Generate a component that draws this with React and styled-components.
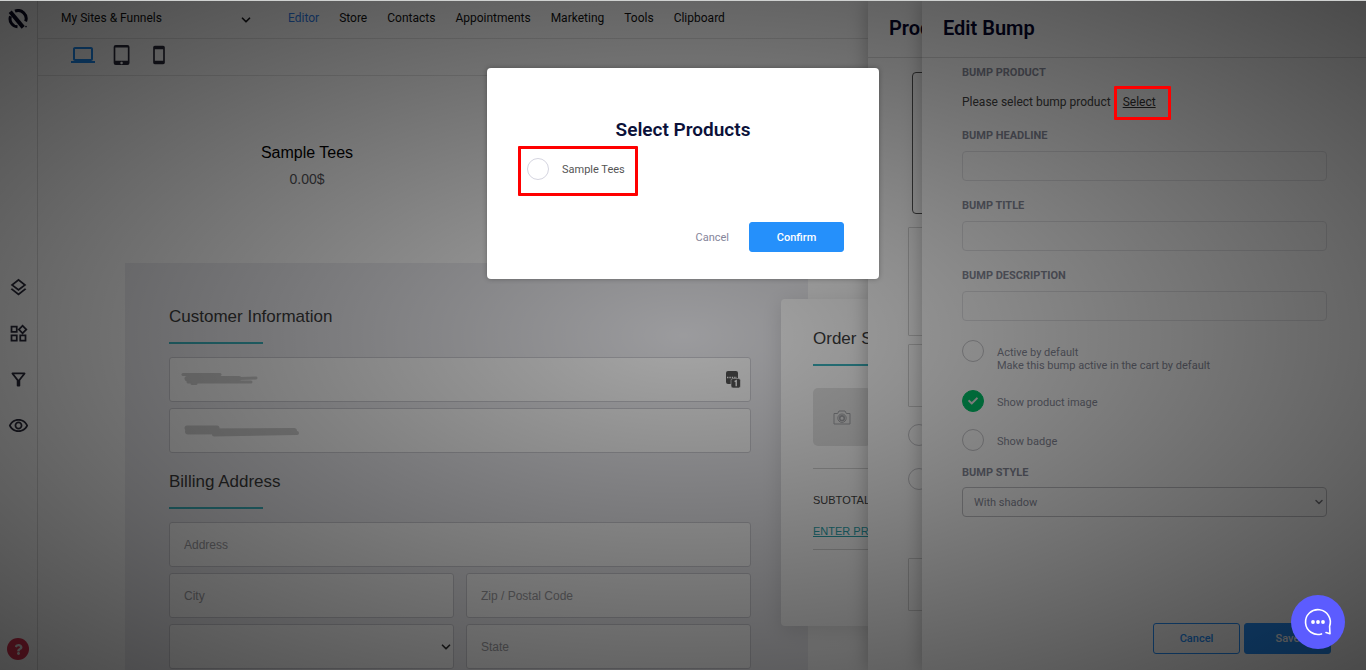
import React, { useState } from 'react';
import styled, { createGlobalStyle } from 'styled-components';
import {
    MdLaptop,
    MdTabletMac,
    MdStayCurrentPortrait,
    MdOutlineLayers,
    MdOutlineWidgets,
    MdOutlineFilterAlt,
    MdOutlineRemoveRedEye,
} from 'react-icons/md';
import { FaCheck, FaQuestion } from 'react-icons/fa';
import { FiChevronDown } from 'react-icons/fi';

const GlobalStyle = createGlobalStyle`
    * {
        box-sizing: border-box;
    }
    body {
        margin: 0;
        font-family: Roboto, "Liberation Sans", sans-serif;
        color: #1b1b1f;
    }
    button, input, select {
        font-family: inherit;
        margin: 0;
    }
`;

const Page = styled.div`
    position: relative;
    display: flex;
    height: 100vh;
    overflow: hidden;
    background-color: #fff;
    border-top: 1px solid #cfd1d0;
`;

/* ---------- sidebar ---------- */

const Sidebar = styled.nav`
    width: 38px;
    flex-shrink: 0;
    display: flex;
    flex-direction: column;
    align-items: center;
    justify-content: space-between;
    padding: 8px 1px 10px 0;
    border-right: 1px solid #dcdcdc;
`;

const SideGroup = styled.div`
    display: flex;
    flex-direction: column;
    gap: 25px;
    padding-top: 46px;
`;

const IconButton = styled.button`
    display: flex;
    align-items: center;
    justify-content: center;
    padding: 0;
    border: none;
    background: none;
    color: ${props => props.$active ? '#1d8bf1' : '#2a2a3a'};
    font-size: ${props => props.$size || 21}px;
    cursor: pointer;
`;

const HelpButton = styled.button`
    width: 22px;
    height: 22px;
    display: flex;
    align-items: center;
    justify-content: center;
    padding: 0;
    border: none;
    border-radius: 50%;
    background-color: #d9304f;
    color: #e4e4e4;
    font-size: 11px;
    cursor: pointer;
`;

/* ---------- header ---------- */

const Main = styled.div`
    flex: 1;
    min-width: 0;
    display: flex;
    flex-direction: column;
`;

const Header = styled.header`
    height: 38px;
    flex-shrink: 0;
    display: flex;
    align-items: center;
    gap: 35px;
    padding: 0 23px 3px;
    border-bottom: 1px solid #e4e4e4;
`;

const SitePicker = styled.label`
    width: 192px;
    display: flex;
    align-items: center;
    position: relative;
    svg {
        position: absolute;
        right: 0;
        top: 4px;
        font-size: 14px;
        stroke-width: 3;
        pointer-events: none;
    }
`;

const SiteSelect = styled.select`
    width: 100%;
    appearance: none;
    border: none;
    padding: 0;
    background: none;
    font-size: 12px;
    line-height: 18px;
    color: #111;
`;

const Menu = styled.nav`
    display: flex;
    gap: 20px;
`;

const MenuLink = styled.a`
    font-size: 12px;
    line-height: 18px;
    text-decoration: none;
    color: ${props => props.$active ? '#2f80ed' : '#111'};
`;

const Devices = styled.div`
    height: 37px;
    flex-shrink: 0;
    display: flex;
    align-items: center;
    gap: 17px;
    padding: 0 33px 4px;
    border-bottom: 1px solid #e4e4e4;
`;

/* ---------- canvas ---------- */

const Canvas = styled.main`
    padding: 65px 87px 0;
    font-family: "Liberation Sans", Arial, sans-serif;
`;

const Products = styled.div`
    display: grid;
    grid-template-columns: repeat(3, 1fr);
    gap: 31px;
`;

const Product = styled.div`
    display: flex;
    flex-direction: column;
    align-items: center;
    gap: 4px;
    height: 122px;
`;

const ProductName = styled.div`
    font-size: 16px;
    line-height: 24px;
    color: #000;
`;

const ProductPrice = styled.div`
    font-size: 14px;
    line-height: 20px;
    color: #55555a;
`;

const Checkout = styled.div`
    display: grid;
    grid-template-columns: 683fr 471fr;
    align-items: start;
`;

const FormPanel = styled.form`
    min-height: 500px;
    padding: 41px 57px 0 44px;
    background-color: #eeeef2;
`;

const SectionTitle = styled.h2`
    margin: 0 0 ${props => props.$gap || 13}px;
    font-size: 17px;
    line-height: 26px;
    font-weight: 400;
    color: #3c3c3c;
    &::after {
        content: '';
        display: block;
        width: ${props => props.$wide ? '100%' : '94px'};
        height: 2px;
        margin-top: 12px;
        background-color: #3cb4bf;
    }
`;

const Fields = styled.div`
    display: grid;
    grid-template-columns: 1fr 1fr;
    gap: 6px 12px;
    margin-bottom: 16px;
`;

const FieldBox = styled.div`
    position: relative;
    grid-column: ${props => props.$full ? '1 / -1' : 'auto'};
    svg {
        position: absolute;
        pointer-events: none;
    }
`;

const field = `
    width: 100%;
    height: 45px;
    display: block;
    padding: 0 14px;
    border: 1px solid #cfcfd5;
    border-radius: 3px;
    background-color: #fff;
    font-size: 12px;
    outline: none;
`;

const Field = styled.input`
    ${field}
    &::placeholder {
        color: #a0a0a4;
    }
`;

const FieldSelect = styled.select`
    ${field}
    appearance: none;
`;

const FieldChevron = styled(FiChevronDown)`
    right: 1px;
    top: 16px;
    font-size: 14px;
    stroke-width: 3;
    color: #333;
`;

const Scribble = styled.svg`
    left: 10px;
    top: 12px;
    width: 124px;
    height: 22px;
`;

const KeyIcon = styled.svg`
    right: 10px;
    top: 13px;
    width: 16px;
    height: 18px;
`;

const Summary = styled.section`
    height: 327px;
    margin: 36px 0 0 -27px;
    padding: 27px 32px;
    border-radius: 4px;
    background-color: #fff;
    box-shadow: 0 4px 20px rgba(0, 0, 0, 0.12);
`;

const Thumb = styled.div`
    width: 58px;
    height: 58px;
    display: flex;
    align-items: center;
    justify-content: center;
    border-radius: 5px;
    background-color: #e6e6e6;
`;

const SummaryRow = styled.div`
    display: flex;
    justify-content: space-between;
    margin-top: 22px;
    padding-top: 22px;
    border-top: 1px solid #d4d4d4;
    font-size: 11px;
    line-height: 18px;
    color: #444;
`;

const PromoRow = styled.div`
    padding: 14px 0 10px;
    border-bottom: 1px solid #d4d4d4;
    font-size: 11px;
    line-height: 16px;
`;

const PromoLink = styled.a`
    color: #2ba6b0;
`;

/* ---------- drawers ---------- */

const Drawer = styled.aside`
    position: absolute;
    top: 0;
    right: 0;
    bottom: 0;
    width: ${props => props.$width}px;
    display: flex;
    flex-direction: column;
    background-color: #fff;
    box-shadow: 0 0 18px rgba(0, 0, 0, 0.28);
`;

const DrawerTitle = styled.h2`
    height: 57px;
    flex-shrink: 0;
    margin: 0;
    padding: 0 21px 2px;
    display: flex;
    align-items: center;
    border-bottom: 1px solid #dedede;
    font-size: 20px;
    font-weight: 600;
    color: #06062e;
`;

const ProductsBody = styled.div`
    padding: 14px 40px;
    display: flex;
    flex-direction: column;
`;

const OutlineBox = styled.div`
    height: ${props => props.$height}px;
    margin: 0 0 ${props => props.$gap || 0}px ${props => props.$selected ? 4 : 0}px;
    border: 1px solid ${props => props.$selected ? '#555' : '#d4d4d4'};
    border-radius: ${props => props.$selected ? 4 : 1}px;
`;

const DrawerBody = styled.div`
    flex: 1;
    padding: 7px 39px 0 40px;
`;

const Label = styled.label`
    display: block;
    margin-bottom: ${props => props.$tight ? 6 : 7}px;
    font-size: 11px;
    line-height: 16px;
    font-weight: 700;
    color: #8a8d9c;
`;

const SelectLine = styled.div`
    display: flex;
    gap: 12px;
    margin: 11px 0 16px;
    font-size: 12px;
    line-height: 20px;
    color: #444;
    a {
        color: #333;
    }
`;

const Marked = styled.span`
    position: relative;
    &::after {
        content: '';
        position: absolute;
        inset: -6px -15px -8px -9px;
        border: 3px solid #f00;
        border-radius: 1px;
        z-index: 20;
        pointer-events: none;
    }
`;

const TextInput = styled.input`
    width: 100%;
    height: 30px;
    display: block;
    margin-bottom: 17px;
    padding: 0 11px;
    border: 1px solid #e4e4e7;
    border-radius: 4px;
    background: none;
    outline: none;
`;

const CheckList = styled.div`
    padding-top: 2px;
`;

const CheckRow = styled.label`
    display: flex;
    gap: 13px;
    margin-bottom: ${props => props.$gap || 0}px;
    font-size: 11px;
    line-height: 13px;
    color: ${props => props.$dark ? '#555' : '#8a8d9c'};
    > span:nth-child(2) {
        padding-top: ${props => props.$dark ? 5 : 6}px;
    }
`;

const CheckBox = styled.span`
    width: 22px;
    height: 22px;
    flex-shrink: 0;
    display: grid;
    place-items: center;
    > * {
        grid-area: 1 / 1;
    }
    input {
        width: 22px;
        height: 22px;
        appearance: none;
        border: 1px solid ${props => props.$light ? '#d5d5e0' : '#c8c8cc'};
        border-radius: 50%;
        cursor: pointer;
    }
    input:checked {
        border-color: #00c46a;
        background-color: #00c46a;
    }
    svg {
        display: none;
        font-size: 10px;
        color: #e8e8e8;
        pointer-events: none;
    }
    input:checked + svg {
        display: block;
    }
`;

const StyleBox = styled.div`
    position: relative;
    svg {
        position: absolute;
        right: 2px;
        top: 9px;
        font-size: 12px;
        stroke-width: 3;
        color: #7a7a80;
        pointer-events: none;
    }
`;

const StyleSelect = styled.select`
    width: 100%;
    height: 30px;
    appearance: none;
    padding: 0 11px;
    border: 1px solid #c4c4c8;
    border-radius: 4px;
    background: none;
    font-size: 11px;
    color: #8a8d9c;
`;

const DrawerFooter = styled.div`
    display: flex;
    justify-content: flex-end;
    gap: 4px;
    padding: 0 35px 16px;
`;

const Button = styled.button`
    width: ${props => props.$width || 87}px;
    height: ${props => props.$short ? 30 : 31}px;
    border: 1px solid #2590fb;
    border-radius: 3px;
    background-color: ${props => props.$primary ? '#2590fb' : 'transparent'};
    color: ${props => props.$primary ? '#fff' : '#2590fb'};
    font-size: 11px;
    font-weight: 500;
    cursor: pointer;
`;

/* ---------- modal ---------- */

const Overlay = styled.div`
    position: absolute;
    inset: 0;
    z-index: 10;
    display: flex;
    align-items: flex-start;
    justify-content: center;
    padding-top: 67px;
    background: radial-gradient(rgba(0, 0, 0, 0.35), rgba(0, 0, 0, 0.71));
`;

const Modal = styled.div`
    width: 392px;
    padding: 49px 35px 27px 31px;
    display: flex;
    flex-direction: column;
    border-radius: 4px;
    background-color: #fff;
    box-shadow: 0 0 5px rgba(0, 0, 0, 0.3);
`;

const ModalTitle = styled.h3`
    margin: 0 0 3px 4px;
    font-size: 19px;
    line-height: 26px;
    font-weight: 600;
    text-align: center;
    color: #0b1139;
`;

const Option = styled.div`
    align-self: flex-start;
    width: 120px;
    height: 50px;
    padding: 9px 6px;
    border: 3px solid #f00;
    border-radius: 1px;
`;

const ModalFooter = styled.div`
    display: flex;
    align-items: center;
    justify-content: flex-end;
    gap: 20px;
    margin-top: 26px;
`;

const TextButton = styled.button`
    padding: 0;
    border: none;
    background: none;
    font-size: 11px;
    color: #85859a;
    cursor: pointer;
`;

const ChatButton = styled.button`
    position: absolute;
    right: 21px;
    bottom: 21px;
    z-index: 20;
    width: 54px;
    height: 54px;
    display: flex;
    align-items: center;
    justify-content: center;
    padding: 0;
    border: none;
    border-radius: 50%;
    background-color: #5c5cff;
    cursor: pointer;
`;

const menu = ['Editor', 'Store', 'Contacts', 'Appointments', 'Marketing', 'Tools', 'Clipboard'];

const Logo = () => (
    <svg width="20" height="20" viewBox="0 0 20 20" fill="none" stroke="#0b0b24">
        <path d="M7 2.2A8 8 0 0 1 17.6 12.4" strokeWidth="3" />
        <path d="M2.5 7.2A8 8 0 0 0 9.5 17.8" strokeWidth="3" />
        <path d="M2.2 2.8L15.2 18.4" strokeWidth="4" />
        <circle cx="18" cy="17.6" r="0.8" fill="#0b0b24" stroke="none" />
    </svg>
);

const Camera = () => (
    <svg width="18" height="15" viewBox="0 0 18 15" fill="none" stroke="#a4a5a9">
        <path d="M1 3.5h3.6L6 1h6l1.4 2.5H17V14H1z" strokeLinejoin="round" />
        <circle cx="9" cy="8.2" r="4.2" />
        <circle cx="9" cy="8.2" r="2.3" strokeWidth="1.6" />
    </svg>
);

const Check = ({ id, light, label, type = 'checkbox', defaultChecked }) => (
    <CheckBox $light={light}>
        <input id={id} type={type} aria-label={label} defaultChecked={defaultChecked} />
        <FaCheck />
    </CheckBox>
);

const CheckoutForm = () => (
    <FormPanel>
        <SectionTitle>Customer Information</SectionTitle>
        <Fields>
            <FieldBox $full>
                <Field aria-label="Full name" />
                <Scribble viewBox="0 0 124 22" fill="none" stroke="#d2d2d2" strokeLinecap="round">
                    <path d="M4 5.5H41" strokeWidth="3" />
                    <path d="M8 9.5H60" strokeWidth="5" />
                    <path d="M8 11L77 9" strokeWidth="3" />
                    <path d="M9 13H72" strokeWidth="3" />
                    <path d="M13 14.5H17" strokeWidth="3" />
                </Scribble>
                <KeyIcon viewBox="0 0 16 18">
                    <rect x="1" y="1" width="12" height="13" rx="2" fill="#555" />
                    <path d="M2 7.5h10" stroke="#fff" strokeWidth="1.4" strokeDasharray="1.4 1" />
                    <rect x="6" y="8.5" width="9.5" height="9.5" rx="2" fill="#555" stroke="#fff" strokeWidth="0.6" />
                    <path d="M9.6 11.6l1.6-.9v5.6" fill="none" stroke="#fff" strokeWidth="1.4" />
                </KeyIcon>
            </FieldBox>
            <FieldBox $full>
                <Field aria-label="Email" />
                <Scribble viewBox="0 0 124 22" fill="none" stroke="#d2d2d2" strokeLinecap="round">
                    <path d="M8 8H38" strokeWidth="5" />
                    <path d="M9 11.5L115 11" strokeWidth="6" />
                    <path d="M35 14.5L118 13" strokeWidth="4" />
                </Scribble>
            </FieldBox>
        </Fields>
        <SectionTitle>Billing Address</SectionTitle>
        <Fields>
            <FieldBox $full><Field placeholder="Address" aria-label="Address" /></FieldBox>
            <FieldBox><Field placeholder="City" aria-label="City" /></FieldBox>
            <FieldBox><Field placeholder="Zip / Postal Code" aria-label="Zip / Postal Code" /></FieldBox>
            <FieldBox>
                <FieldSelect aria-label="Country"><option></option></FieldSelect>
                <FieldChevron />
            </FieldBox>
            <FieldBox><Field placeholder="State" aria-label="State" /></FieldBox>
        </Fields>
    </FormPanel>
);

const BumpDrawer = () => (
    <Drawer $width={444}>
        <DrawerTitle>Edit Bump</DrawerTitle>
        <DrawerBody>
            <Label as="div">BUMP PRODUCT</Label>
            <SelectLine>
                <span>Please select bump product</span>
                <Marked><a href="#select">Select</a></Marked>
            </SelectLine>
            <Label htmlFor="headline">BUMP HEADLINE</Label>
            <TextInput id="headline" />
            <Label htmlFor="title">BUMP TITLE</Label>
            <TextInput id="title" />
            <Label htmlFor="description">BUMP DESCRIPTION</Label>
            <TextInput id="description" />
            <CheckList>
                <CheckRow htmlFor="active" $gap={18}>
                    <Check id="active" />
                    <span>Active by default<br />Make this bump active in the cart by default</span>
                </CheckRow>
                <CheckRow htmlFor="image" $gap={17}>
                    <Check id="image" defaultChecked />
                    <span>Show product image</span>
                </CheckRow>
                <CheckRow htmlFor="badge" $gap={14}>
                    <Check id="badge" />
                    <span>Show badge</span>
                </CheckRow>
            </CheckList>
            <Label htmlFor="style" $tight>BUMP STYLE</Label>
            <StyleBox>
                <StyleSelect id="style"><option>With shadow</option></StyleSelect>
                <FiChevronDown />
            </StyleBox>
        </DrawerBody>
        <DrawerFooter>
            <Button>Cancel</Button>
            <Button $primary>Save</Button>
        </DrawerFooter>
    </Drawer>
);

export default function App() {
    const [open, setOpen] = useState(true);
    const close = () => setOpen(false);
    return (
        <Page>
            <GlobalStyle />
            <Sidebar>
                <Logo />
                <SideGroup>
                    <IconButton aria-label="Layers"><MdOutlineLayers /></IconButton>
                    <IconButton aria-label="Widgets"><MdOutlineWidgets /></IconButton>
                    <IconButton aria-label="Filter"><MdOutlineFilterAlt /></IconButton>
                    <IconButton aria-label="Preview"><MdOutlineRemoveRedEye /></IconButton>
                </SideGroup>
                <HelpButton aria-label="Help"><FaQuestion /></HelpButton>
            </Sidebar>
            <Main>
                <Header>
                    <SitePicker>
                        <SiteSelect aria-label="Section"><option>My Sites &amp; Funnels</option></SiteSelect>
                        <FiChevronDown />
                    </SitePicker>
                    <Menu>
                        {menu.map(item => (
                            <MenuLink key={item} href={'#' + item} $active={item === 'Editor'}>{item}</MenuLink>
                        ))}
                    </Menu>
                </Header>
                <Devices>
                    <IconButton $active $size={24} aria-label="Desktop"><MdLaptop /></IconButton>
                    <IconButton $size={20} aria-label="Tablet"><MdTabletMac /></IconButton>
                    <IconButton $size={20} aria-label="Phone"><MdStayCurrentPortrait /></IconButton>
                </Devices>
                <Canvas>
                    <Products>
                        <Product>
                            <ProductName>Sample Tees</ProductName>
                            <ProductPrice>0.00$</ProductPrice>
                        </Product>
                    </Products>
                    <Checkout>
                        <CheckoutForm />
                        <Summary>
                            <SectionTitle $wide $gap={22}>Order Summary</SectionTitle>
                            <Thumb><Camera /></Thumb>
                            <SummaryRow>SUBTOTAL</SummaryRow>
                            <PromoRow><PromoLink href="#promo">ENTER PROMO CODE</PromoLink></PromoRow>
                        </Summary>
                    </Checkout>
                </Canvas>
            </Main>
            <Drawer $width={498}>
                <DrawerTitle>Products</DrawerTitle>
                <ProductsBody>
                    <OutlineBox $selected $height={142} $gap={13} />
                    <OutlineBox $height={109} $gap={8} />
                    <OutlineBox $height={63} $gap={17} />
                    <CheckRow $gap={22}><Check label="Single product" /></CheckRow>
                    <CheckRow $gap={68}><Check label="Show quantity" /></CheckRow>
                    <OutlineBox $height={53} />
                </ProductsBody>
            </Drawer>
            <BumpDrawer />
            {open && (
                <Overlay>
                    <Modal role="dialog" aria-labelledby="modal-title">
                        <ModalTitle id="modal-title">Select Products</ModalTitle>
                        <Option>
                            <CheckRow htmlFor="tees" $dark>
                                <Check id="tees" type="radio" light />
                                <span>Sample Tees</span>
                            </CheckRow>
                        </Option>
                        <ModalFooter>
                            <TextButton onClick={close}>Cancel</TextButton>
                            <Button $primary $short $width={95} onClick={close}>Confirm</Button>
                        </ModalFooter>
                    </Modal>
                </Overlay>
            )}
            <ChatButton aria-label="Chat">
                <svg width="30" height="30" viewBox="0 0 30 30" fill="none" stroke="#fff" strokeWidth="1.6">
                    <path d="M18.5 26.9A12.4 12.4 0 1 1 26.6 19.2L27 26.8L23 25.6" strokeLinecap="round" strokeLinejoin="round" />
                    <g fill="#fff" stroke="none">
                        <circle cx="10" cy="15" r="1.9" />
                        <circle cx="15" cy="15" r="1.9" />
                        <circle cx="20" cy="15" r="1.9" />
                    </g>
                </svg>
            </ChatButton>
        </Page>
    );
}
